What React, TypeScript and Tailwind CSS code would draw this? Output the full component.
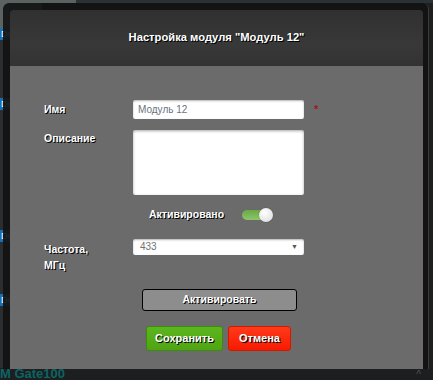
import React from "react";

const shadow = { textShadow: "1px 1px 0 #000" };

export default function App() {
  return (
    <div
      className="relative w-[433px] h-[380px] overflow-hidden bg-[#1c1f20] flex flex-col"
      style={{ fontFamily: '"Liberation Sans", Arial, sans-serif' }}
    >
      {/* page background */}
      <div className="flex flex-1">
        <div className="w-[42px] h-full bg-[#3b4142] flex flex-col">
          <div className="h-[28px] bg-[#5a6262]" />
          <div className="h-[12px] bg-[#1a6fb3] text-[9px] leading-[12px] text-white pl-[1px]">Do</div>
          <div className="h-[58px] bg-[#2a2e30]" />
          <div className="h-[12px] bg-[#1a6fb3] text-[9px] leading-[12px] text-white pl-[1px]">Do</div>
          <div className="h-[120px] bg-[#2a2e30]" />
          <div className="h-[12px] bg-[#1a6fb3] text-[9px] leading-[12px] text-white pl-[1px]">Do</div>
          <div className="h-[52px] bg-[#2a2e30]" />
          <div className="h-[12px] bg-[#1a6fb3] text-[9px] leading-[12px] text-white pl-[1px]">Do</div>
          <div className="flex-1 bg-[#2a2e30]" />
        </div>
        <div className="flex-1 flex flex-col">
          <div className="h-[3px] flex">
            <div className="w-[34px] bg-[#5a6262]" />
            <div className="flex-1 bg-[#2a3236]" />
          </div>
          <div className="flex-1 bg-[#1c1e1f]" />
        </div>
      </div>
      <div className="h-[12px] bg-[#1c1e1f] flex items-end justify-between pr-[12px]">
        <span className="text-[13px] leading-[12px] font-bold text-[#0c6464] whitespace-nowrap">M Gate100</span>
        <span className="text-[10px] leading-[10px] text-[#555]">^</span>
      </div>

      {/* modal */}
      <div className="absolute left-[3px] top-[3px] w-[426px] h-[366px] rounded-t-[6px] bg-[rgba(18,18,18,0.92)] pt-[7px] pl-[7px] pr-[6px] border-r border-[#3a3a3a]">
        <div className="w-[413px] flex flex-col">
          <div
            className="h-[56px] rounded-t-[4px] flex items-center justify-center text-white font-bold text-[11.2px] pb-[2px]"
            style={{ background: "linear-gradient(#303030, #383838 60%, #333333)", ...shadow }}
          >
            Настройка модуля "Модуль 12"
          </div>
          <div className="h-[303px] bg-[#6b6b6b] pl-[34px] pt-[34px] text-[10.5px]">
            {/* name */}
            <div className="flex items-start h-[19px]">
              <div className="w-[89px] text-white font-bold pt-[2px]" style={shadow}>Имя</div>
              <div className="w-[171px] h-[19px] bg-white rounded-[2px] shadow-[inset_0_1px_2px_rgba(0,0,0,0.3)] text-[#6a7480] text-[10px] leading-[19px] pl-[5px]">
                Модуль 12
              </div>
              <div className="ml-[10px] text-[#a01818] text-[11px] leading-[12px] pt-[3px] font-bold">*</div>
            </div>
            {/* description */}
            <div className="flex items-start mt-[11px]">
              <div className="w-[89px] text-white font-bold pt-[1px]" style={shadow}>Описание</div>
              <div className="w-[171px] h-[65px] bg-white rounded-[2px] shadow-[inset_0_1px_3px_rgba(0,0,0,0.35)]" />
            </div>
            {/* toggle */}
            <div className="flex items-center mt-[13px] h-[14px]">
              <div className="w-[105px]" />
              <div className="w-[93px] text-white font-bold" style={shadow}>Активировано</div>
              <div className="relative w-[31px] h-[14px] flex items-center">
                <div className="w-[27px] h-[10px] rounded-full bg-[linear-gradient(#6aa845,#8cc66a)]" />
                <div className="absolute right-0 top-0 w-[14px] h-[14px] rounded-full bg-[radial-gradient(circle_at_40%_35%,#ffffff,#d8d8d8)] shadow-[0_0_1px_rgba(0,0,0,0.5)]" />
              </div>
            </div>
            {/* frequency */}
            <div className="flex items-start mt-[17px]">
              <div className="w-[89px] text-white font-bold leading-[16px] pt-[2px]" style={shadow}>
                Частота,
                <br />
                МГц
              </div>
              <div className="w-[171px] h-[16px] bg-white rounded-[2px] shadow-[inset_0_1px_2px_rgba(0,0,0,0.3)] text-[#707070] text-[10px] leading-[16px] pl-[7px] pr-[6px] flex justify-between">
                <span>433</span>
                <span className="text-[7px] text-[#555]">▼</span>
              </div>
            </div>
            {/* activate */}
            <div className="flex mt-[16px]">
              <div
                className="w-[155px] ml-[98px] h-[22px] bg-[#8d8d8d] border border-black rounded-[3px] flex items-center justify-center text-white font-bold"
                style={shadow}
              >
                Активировать
              </div>
            </div>
            {/* buttons */}
            <div className="flex mt-[15px] pl-[102px] gap-[5px]">
              <div
                className="w-[77px] h-[25px] rounded-[3px] border border-[#3f8a10] flex items-center justify-center text-white font-bold text-[11px]"
                style={{ background: "linear-gradient(#5cb61e, #4ea412)", ...shadow }}
              >
                Сохранить
              </div>
              <div
                className="w-[63px] h-[25px] rounded-[3px] border border-[#d01a00] flex items-center justify-center text-white font-bold text-[11px]"
                style={{ background: "linear-gradient(#ff3a1a, #f81a00)", ...shadow }}
              >
                Отмена
              </div>
            </div>
          </div>
        </div>
      </div>
    </div>
  );
}
